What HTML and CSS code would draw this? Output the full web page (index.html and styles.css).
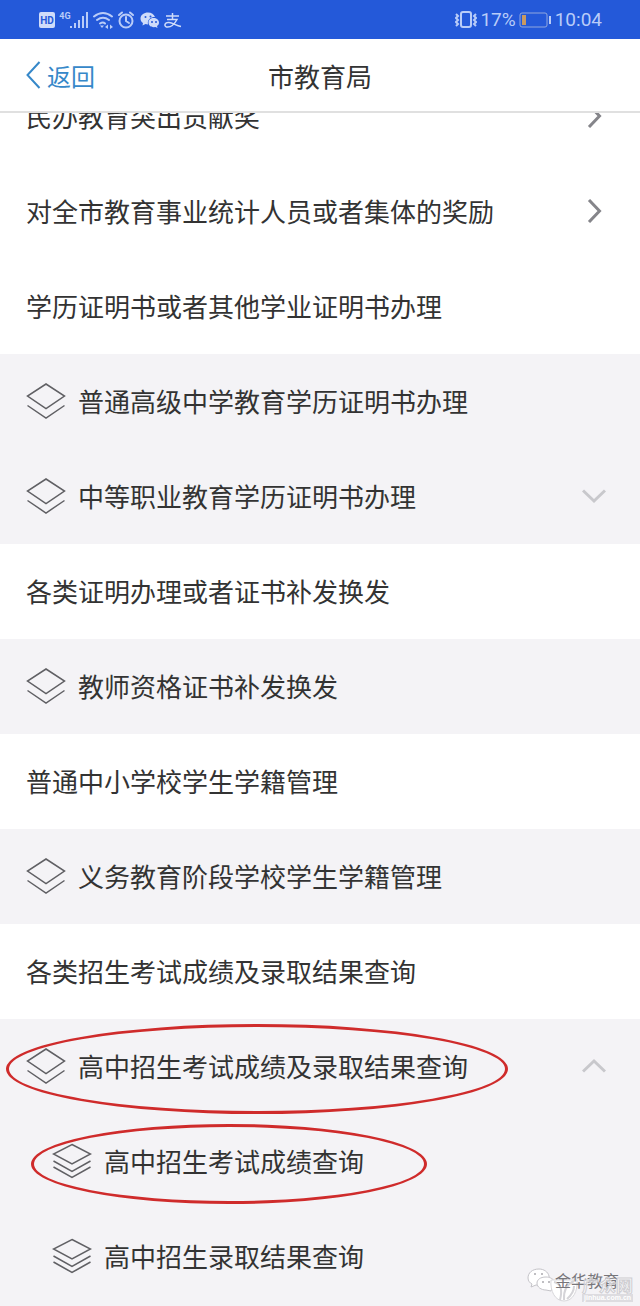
FILE: index.html
```html
<!DOCTYPE html>
<html lang="zh-CN">
<head>
    <meta charset="UTF-8">
    <meta name="viewport" content="width=device-width, initial-scale=1.0">
    <title>市教育局</title>
    <link rel="stylesheet" href="styles.css">
</head>
<body>
    <!-- Iconos reutilizados -->
    <svg class="sprite" aria-hidden="true">
        <symbol id="layers-2" viewBox="0 0 40 36">
            <path d="M20 1 L38.500 13 L20 25.500 L1.500 13 Z M1.500 22.500 L20 35 L38.500 22.500"/>
        </symbol>
        <symbol id="layers-3" viewBox="0 0 40 36">
            <path d="M20 1.500 L38.500 11 L20 21 L1.500 11 Z M1.500 18 L20 28.500 L38.500 18 M1.500 24 L20 34.500 L38.500 24"/>
        </symbol>
        <symbol id="chevron" viewBox="0 0 24 24">
            <path d="M7 1 L17.500 12 L7 23"/>
        </symbol>
        <symbol id="arrow" viewBox="0 0 24 24">
            <path d="M1 6.500 L12 17 L23 6.500"/>
        </symbol>
    </svg>

    <div class="status-bar">
        <div class="status-left">
            <svg width="148" height="22" viewBox="0 0 148 22" aria-hidden="true">
                <rect x="1" y="3" width="16" height="16" rx="2" fill="#cfdcfa"/>
                <text x="9" y="15" class="hd-text">HD</text>
                <text x="27" y="10" class="net-text">4G</text>
                <g fill="#b9ccf8">
                    <rect x="32" y="17" width="2" height="2"/>
                    <rect x="36" y="14" width="2" height="5"/>
                    <rect x="40" y="11" width="2" height="8"/>
                    <rect x="44" y="7" width="2" height="12"/>
                    <rect x="48" y="3" width="2" height="16"/>
                </g>
                <g fill="none" stroke="#b9ccf8" stroke-width="2" stroke-linecap="round">
                    <path d="M56 7.500 Q65 0.500 74 7.500 M59 11 Q65 6.500 71 11 M62 14.500 Q65 12.500 67 14.500"/>
                    <circle cx="88" cy="12" r="6.500"/>
                    <path d="M88 8 V12 L91 14 M81 6 L84 3.500 M95 6 L92 3.500"/>
                </g>
                <path d="M64 19 L62 16.500 H66 Z M67 18 L70 15.500 V20 Z M75 18 L72 15.500 V20 Z" fill="#b9ccf8"/>
                <g fill="#cfdcfa">
                    <path d="M110 3.500 C106 3.500 102.500 6 102.500 9.500 C102.500 11.500 103.500 13 105 14 L104.500 16.500 L107.500 15 L110 15.500 C109 10.500 112.500 8 117 8 C116 5.500 113.500 3.500 110 3.500 Z"/>
                    <path d="M115.500 9 C111.800 9 110.500 11.500 110.500 13.500 C110.500 16.500 113 18.200 115.500 18.200 L117.500 18 L119.500 19 L119 17 C120.500 16 121 15 121 13.500 C121 11 118.500 9 115.500 9 Z"/>
                </g>
                <g fill="#2459d9">
                    <circle cx="107.500" cy="8" r="1"/>
                    <circle cx="112.500" cy="7.500" r="1"/>
                    <circle cx="114" cy="13" r="1"/>
                    <circle cx="118" cy="13" r="1"/>
                </g>
                <path d="M128 7 H141 M134.500 4 V10 M129 10.500 H139 C136 16 132 18.500 128.500 18 C125.500 17 127 13 131 13.500 C135 14 138 16.500 143 17.500" fill="none" stroke="#cfdcfa" stroke-width="1.500"/>
            </svg>
        </div>
        <div class="status-right">
            <svg width="22" height="20" viewBox="0 0 22 20" fill="none" stroke="#b9ccf8" stroke-width="2" aria-hidden="true">
                <rect x="6" y="2" width="10" height="15" rx="2"/>
                <path d="M1 4 L3 6 L1 8 L3 10 L1 12 L3 14 L1 16 M21 4 L19 6 L21 8 L19 10 L21 12 L19 14 L21 16"/>
            </svg>
            <span>17%</span>
            <svg width="33" height="16" viewBox="0 0 33 16" aria-hidden="true">
                <rect x="1" y="1" width="27" height="14" rx="2" fill="none" stroke="#91a8de"/>
                <rect x="3" y="3" width="4" height="10" fill="#c99a62"/>
                <rect x="30" y="4" width="2" height="8" fill="#b9ccf8"/>
            </svg>
            <span>10:04</span>
        </div>
    </div>

    <header class="navbar">
        <a href="#" class="back">
            <svg width="15" height="28" viewBox="0 0 15 28" aria-hidden="true">
                <path d="M13.500 1 L1.500 14 L13.500 27"/>
            </svg>
            返回
        </a>
        <h1>市教育局</h1>
    </header>

    <main class="content">
        <ul class="list">
            <li><a href="#" class="row"><span>民办教育突出贡献奖</span><svg class="icon-more"><use href="#chevron"/></svg></a></li>
            <li><a href="#" class="row"><span>对全市教育事业统计人员或者集体的奖励</span><svg class="icon-more"><use href="#chevron"/></svg></a></li>
            <li>
                <h2 class="row">学历证明书或者其他学业证明书办理</h2>
                <ul class="sublist">
                    <li><a href="#" class="row"><svg class="icon-layers"><use href="#layers-2"/></svg><span>普通高级中学教育学历证明书办理</span></a></li>
                    <li><button type="button" class="row" aria-expanded="false"><svg class="icon-layers"><use href="#layers-2"/></svg><span>中等职业教育学历证明书办理</span><svg class="icon-arrow"><use href="#arrow"/></svg></button></li>
                </ul>
            </li>
            <li>
                <h2 class="row">各类证明办理或者证书补发换发</h2>
                <ul class="sublist">
                    <li><a href="#" class="row"><svg class="icon-layers"><use href="#layers-2"/></svg><span>教师资格证书补发换发</span></a></li>
                </ul>
            </li>
            <li>
                <h2 class="row">普通中小学校学生学籍管理</h2>
                <ul class="sublist">
                    <li><a href="#" class="row"><svg class="icon-layers"><use href="#layers-2"/></svg><span>义务教育阶段学校学生学籍管理</span></a></li>
                </ul>
            </li>
            <li>
                <h2 class="row">各类招生考试成绩及录取结果查询</h2>
                <ul class="sublist">
                    <li>
                        <button type="button" class="row" aria-expanded="true"><svg class="icon-layers"><use href="#layers-2"/></svg><span>高中招生考试成绩及录取结果查询</span><svg class="icon-arrow open"><use href="#arrow"/></svg><i class="mark mark-large"></i></button>
                        <ul class="sublist">
                            <li><a href="#" class="row child"><svg class="icon-layers"><use href="#layers-3"/></svg><span>高中招生考试成绩查询</span><i class="mark mark-small"></i></a></li>
                            <li><a href="#" class="row child"><svg class="icon-layers"><use href="#layers-3"/></svg><span>高中招生录取结果查询</span></a></li>
                        </ul>
                    </li>
                </ul>
            </li>
        </ul>

        <div class="watermark">
            <svg width="108" height="38" viewBox="0 0 108 38" aria-hidden="true">
                <g fill="#fff" stroke="#c4c3c8">
                    <path d="M12 3 C5 3 1 7 1 12 C1 15 3 17 5 18 L4 21 L9 19 C20 20 23 15 22 10 C21 6 17 3 12 3 Z"/>
                    <path d="M19 11 C13 11 10 14 10 17 C10 21 14 24 19 24 L24 25 L25 22 C31 17 26 11 19 11 Z"/>
                </g>
                <g fill="#aaa9ae">
                    <circle cx="8" cy="8" r="1"/>
                    <circle cx="15" cy="8" r="1"/>
                    <circle cx="16" cy="16" r="1"/>
                    <circle cx="22" cy="16" r="1"/>
                </g>
                <path d="M24 14 H50 C51 25 46 35 37 35 C28 35 23 25 24 14 Z" fill="#fff" stroke="#d8d7db"/>
                <path d="M27 16 Q37 18 33 34 M47 15 Q36 20 37 34 M40 33 Q47 27 47 20" fill="none" stroke="#d5d4d8" stroke-width="2"/>
                <text x="28" y="21" class="wm-name">金华教育</text>
                <text x="55" y="26" class="wm-site">广众网</text>
                <rect x="55" y="28" width="51" height="8" fill="#dddce0"/>
                <text x="57" y="34" class="wm-url">jinhua.com.cn</text>
            </svg>
        </div>
    </main>
</body>
</html>
```
FILE: styles.css
```css
:root {
    --bar-bg: #2459d9;
    --bar-text: #b9ccf8;
    --text-color: #333;
    --link-color: #3688c9;
    --sub-bg: #f4f3f6;
    --line-color: #e0e0e0;
    --mark-color: #cf2b2b;
}

* {
    box-sizing: border-box;
}
body {
    font-family: "Noto Sans CJK SC", sans-serif;
    background-color: var(--sub-bg);
    color: var(--text-color);
    margin: 0;
    min-height: 100vh;
    display: flex;
    flex-direction: column;
}
ul {
    list-style: none;
    margin: 0;
    padding: 0;
}
.sprite {
    display: none;
}

/* Barra de estado */
.status-bar {
    display: flex;
    justify-content: space-between;
    align-items: center;
    height: 39px;
    padding: 0 38px;
    background-color: var(--bar-bg);
    color: var(--bar-text);
    font-family: Roboto, sans-serif;
    font-size: 19px;
}
.status-left,
.status-right {
    display: flex;
    align-items: center;
}
.status-right {
    gap: 3px;
}
.hd-text {
    font: bold 10px Roboto, sans-serif;
    fill: var(--bar-bg);
    text-anchor: middle;
}
.net-text {
    font: bold 9px Roboto, sans-serif;
    fill: var(--bar-text);
    text-anchor: middle;
}

/* Cabecera */
.navbar {
    display: grid;
    grid-template-columns: 1fr auto 1fr;
    align-items: center;
    height: 74px;
    padding: 0 26px;
    background-color: #fff;
    border-bottom: 2px solid var(--line-color);
}
.back {
    display: flex;
    align-items: center;
    gap: 6px;
    color: var(--link-color);
    font-size: 24px;
    text-decoration: none;
}
.back svg {
    fill: none;
    stroke: var(--link-color);
    stroke-width: 2;
}
.navbar h1 {
    margin: 0;
    font-size: 26px;
    font-weight: normal;
}

/* Lista, desplazada bajo la cabecera */
.content {
    position: relative;
    flex-grow: 1;
    overflow: hidden;
}
.list {
    margin-top: -44px;
    background-color: #fff;
}
.sublist {
    background-color: var(--sub-bg);
}
.row {
    position: relative;
    display: flex;
    align-items: center;
    width: 100%;
    height: 95px;
    margin: 0;
    padding: 0 34px 2px 26px;
    border: none;
    background: none;
    color: inherit;
    font-family: inherit;
    font-size: 26px;
    font-weight: normal;
    text-align: left;
    text-decoration: none;
}
.child {
    padding-left: 52px;
}
button.row {
    cursor: pointer;
}
.icon-layers {
    width: 40px;
    height: 36px;
    margin-right: 12px;
    fill: none;
    stroke: #606064;
    stroke-width: 1.5;
}
.icon-more,
.icon-arrow {
    width: 24px;
    height: 24px;
    margin-left: auto;
    fill: none;
    stroke: #85858a;
    stroke-width: 3;
}
.icon-arrow {
    stroke: #c8c8cc;
}
.icon-arrow.open {
    transform: rotate(180deg);
}

/* Marcas rojas sobre las filas */
.mark {
    position: absolute;
    border: 3px solid var(--mark-color);
    border-radius: 50%;
    pointer-events: none;
}
.mark-large {
    top: 5px;
    left: 6px;
    width: 502px;
    height: 90px;
}
.mark-small {
    top: 10px;
    left: 31px;
    width: 396px;
    height: 80px;
}

/* Marca de agua */
.watermark {
    position: absolute;
    right: 5px;
    bottom: 2px;
}
.watermark svg {
    display: block;
}
.wm-name {
    font: 16px "Noto Sans CJK SC", sans-serif;
    fill: #77767a;
}
.wm-site {
    font: bold 17px "Noto Sans CJK SC", sans-serif;
    fill: #fff;
    fill-opacity: 0.5;
    stroke: #cfced2;
}
.wm-url {
    font: bold 7px "Liberation Sans", sans-serif;
    fill: #fff;
}
```
